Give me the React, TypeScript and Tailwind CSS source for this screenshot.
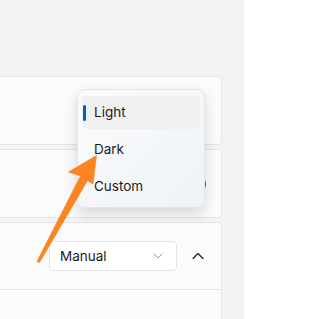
import { ChevronDown, ChevronUp } from "lucide-react";

const font = { fontFamily: "Inter, 'Noto Sans', sans-serif" };

function MenuItem({ label, selected }: { label: string; selected?: boolean }) {
  return (
    <div
      className={`relative flex h-[33px] items-center rounded-[4px] pl-[12px] text-[13.5px] text-[#1b1b1b] ${
        selected ? "bg-[#f0f0f0]" : ""
      }`}
    >
      {selected && (
        <span className="absolute left-[1px] top-[9px] h-[16px] w-[3px] rounded-full bg-[#005fb8]" />
      )}
      {label}
    </div>
  );
}

export default function App() {
  return (
    <div
      className="relative h-[319px] w-[244px] overflow-hidden bg-[#f3f3f3]"
      style={font}
    >
      {/* cards */}
      <div className="ml-[-10px] flex w-[232px] flex-col gap-[4px] pt-[76px]">
        <div className="h-[69px] rounded-[4px] border border-[#e5e5e5] bg-[#fbfbfb]" />
        <div className="flex h-[69px] items-center justify-end rounded-[4px] border border-[#e5e5e5] bg-[#fbfbfb] pr-[15px]">
          <div className="h-[20px] w-[40px] rounded-full bg-[#005fb8]" />
        </div>
        <div className="rounded-t-[4px] border border-b-0 border-[#e5e5e5] bg-[#fbfbfb]">
          <div className="flex h-[67px] items-center justify-end gap-[11px] border-b border-[#e5e5e5] pr-[13px]">
            <div className="flex h-[30px] w-[128px] items-center justify-between rounded-[4px] border border-[#e5e5e5] bg-white pl-[10px] pr-[10px] text-[13.5px] text-[#1b1b1b]">
              <span>Manual</span>
              <ChevronDown className="h-[16px] w-[16px] text-[#7a7a7a]" strokeWidth={1.2} />
            </div>
            <ChevronUp className="h-[20px] w-[20px] text-[#1b1b1b]" strokeWidth={1.4} />
          </div>
          <div className="h-[40px]" />
        </div>
      </div>

      {/* flyout */}
      <div className="absolute left-[77px] top-[89px] w-[128px] rounded-[8px] border border-[#e2e4e8] bg-gradient-to-br from-[#fbfbfb] to-[#eef3f9] px-[4px] pb-[4px] pt-[6px] shadow-[0_6px_14px_rgba(0,0,0,0.14)]">
        <div className="flex flex-col gap-[4px]">
          <MenuItem label="Light" selected />
          <MenuItem label="Dark" />
          <MenuItem label="Custom" />
        </div>
      </div>

      {/* arrow annotation */}
      <svg
        className="absolute left-0 top-0"
        width="244"
        height="319"
        viewBox="0 0 244 319"
      >
        <polygon
          points="96.5,155.5 93,184 87.5,180.5 39.5,262.5 37,261.5 80.5,176 68.5,172"
          fill="#fb8520"
          stroke="#f47c16"
          strokeWidth="0.6"
          strokeLinejoin="round"
        />
      </svg>
    </div>
  );
}
